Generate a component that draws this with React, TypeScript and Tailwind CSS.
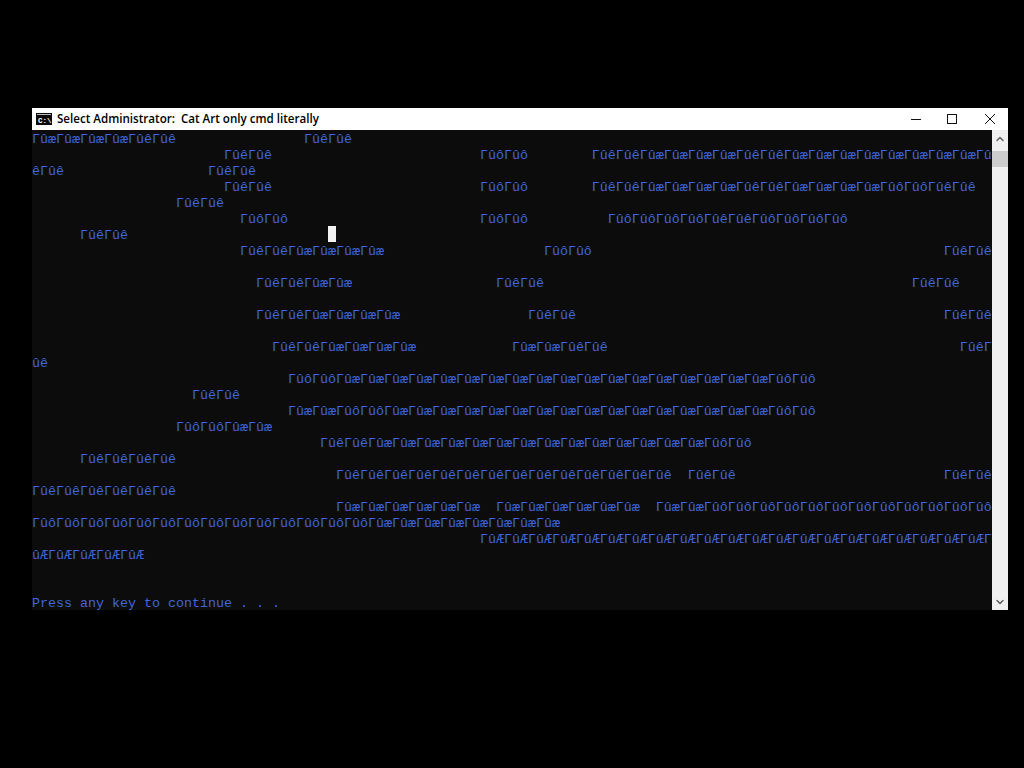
import { ChevronUp, ChevronDown } from "lucide-react";

const g = (c: string, n = 1) => ("Γû" + c).repeat(n);

// place text segments at character columns of the 120 column console
const row = (...segs: [number, string][]) => {
  let s = "";
  for (const [col, text] of segs) s = s.padEnd(col, " ") + text;
  return s;
};

const E = "ê";
const A = "æ";
const O = "ô";
const W = "Æ";

const lines: string[] = [
  row([0, g(A, 4) + g(E, 2)], [34, g(E, 2)]),
  row([24, g(E, 2)], [56, g(O, 2)], [70, g(E, 2) + g(A, 4) + g(E, 2) + g(A, 8) + "Γû"]),
  row([0, E + g(E)], [22, g(E, 2)]),
  row([24, g(E, 2)], [56, g(O, 2)], [70, g(E, 2) + g(A, 4) + g(E, 2) + g(A, 4) + g(O, 2) + g(E, 2)]),
  row([18, g(E, 2)]),
  row([26, g(O, 2)], [56, g(O, 2)], [72, g(O, 4) + g(E, 2) + g(O, 4)]),
  row([6, g(E, 2)]),
  row([26, g(E, 2) + g(A, 4)], [64, g(O, 2)], [114, g(E, 2)]),
  "",
  row([28, g(E, 2) + g(A, 2)], [58, g(E, 2)], [110, g(E, 2)]),
  "",
  row([28, g(E, 2) + g(A, 4)], [62, g(E, 2)], [114, g(E, 2)]),
  "",
  row([30, g(E, 2) + g(A, 4)], [60, g(A, 2) + g(E, 2)], [116, g(E) + "Γ"]),
  "û" + E,
  row([32, g(O, 2) + g(A, 18) + g(O, 2)]),
  row([20, g(E, 2)]),
  row([32, g(A, 2) + g(O, 2) + g(A, 16) + g(O, 2)]),
  row([18, g(O, 2) + g(A, 2)]),
  row([36, g(E, 2) + g(A, 14) + g(O, 2)]),
  row([6, g(E, 4)]),
  row([38, g(E, 14)], [82, g(E, 2)], [114, g(E, 2)]),
  g(E, 6),
  row([38, g(A, 6)], [58, g(A, 6)], [78, g(A, 2) + g(O, 12)]),
  g(O, 14) + g(A, 8),
  row([56, g(W, 21) + "Γ"]),
  "û" + W + g(W, 4),
  "",
  "",
  "Press any key to continue . . .",
];

const App = () => {
  return (
    <div className="min-h-screen w-full bg-black pt-[108px] pl-8">
      <div className="w-[976px] h-[502px] flex flex-col">
        {/* Title bar */}
        <div className="h-[22px] bg-white flex items-center shrink-0">
          <svg width="16" height="12" viewBox="0 0 16 12" className="ml-[4px] shrink-0">
            <rect x="0" y="0" width="16" height="12" fill="#0a0a0a" />
            <rect x="1" y="1" width="14" height="1" fill="#bbb" />
            <text x="2" y="10" fontSize="7.5" fontWeight="700" fontFamily="'Liberation Mono', monospace" fill="#fff">C:\</text>
          </svg>
          <span className="ml-[5px] font-['Open_Sans',sans-serif] text-[11.6px] font-semibold text-black whitespace-pre leading-none">
            Select Administrator:  Cat Art only cmd literally
          </span>
          <div className="ml-auto flex items-center h-full">
            <div className="w-9 h-full flex items-center justify-center">
              <svg width="10" height="10" viewBox="0 0 10 10"><path d="M0 5.5H10" stroke="#111" /></svg>
            </div>
            <div className="w-9 h-full mr-[2px] flex items-center justify-center">
              <svg width="10" height="10" viewBox="0 0 10 10"><rect x="0.5" y="0.5" width="9" height="9" fill="none" stroke="#111" /></svg>
            </div>
            <div className="w-9 h-full flex items-center justify-center">
              <svg width="10" height="10" viewBox="0 0 10 10"><path d="M0 0L10 10M10 0L0 10" stroke="#111" /></svg>
            </div>
          </div>
        </div>

        <div className="flex flex-1 min-h-0">
          {/* Console output */}
          <div className="relative w-[960px] h-[480px] bg-[#0c0c0c] overflow-hidden font-['Liberation_Mono',monospace] text-[13.33px] leading-5 text-[#4464dc]">
            {lines.map((line, i) => (
              <div key={i} className="h-4 whitespace-pre">{line}</div>
            ))}
            <div className="absolute left-[296px] top-[96px] w-2 h-4 bg-[#f2f2f2]" />
          </div>

          {/* Scrollbar */}
          <div className="w-4 bg-[#f0f0f0] flex flex-col">
            <div className="h-[17px] flex items-center justify-center">
              <ChevronUp size={12} strokeWidth={3} className="text-[#606060]" />
            </div>
            <div className="h-4 mt-1 bg-[#cdcdcd]" />
            <div className="flex-1" />
            <div className="h-[17px] flex items-center justify-center">
              <ChevronDown size={12} strokeWidth={3} className="text-[#606060]" />
            </div>
          </div>
        </div>
      </div>
    </div>
  );
};

export default App;
